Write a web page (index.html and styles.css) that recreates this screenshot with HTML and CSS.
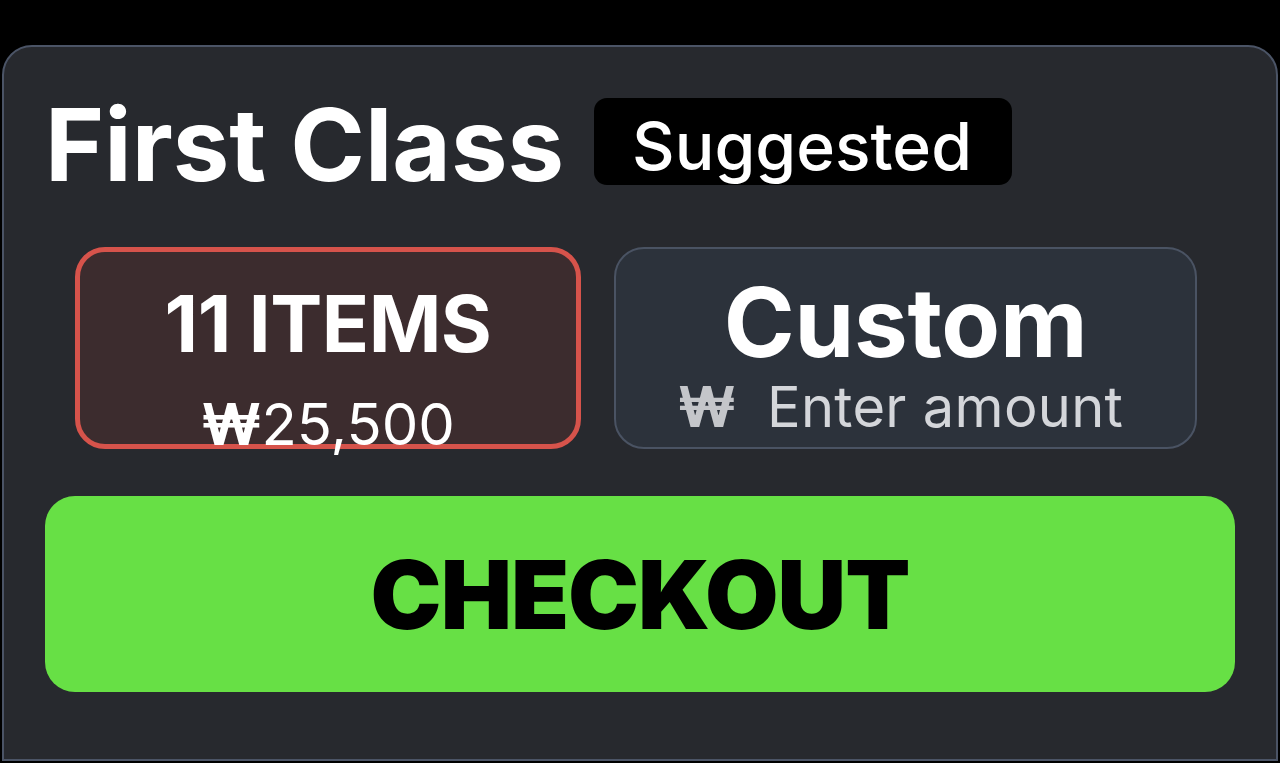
FILE: index.html
```html
<!DOCTYPE html>
<html lang="en">
<head>
<meta charset="utf-8">
<title>First Class</title>
<link rel="stylesheet" href="styles.css">
</head>
<body>
<div class="card">
  <div class="header">
    <h1 class="title">First Class</h1>
    <span class="badge">Suggested</span>
  </div>
  <div class="options">
    <div class="option option-selected">
      <div class="opt-title">11 ITEMS</div>
      <div class="opt-price"><span class="won-bold">₩</span>25,500</div>
    </div>
    <div class="option option-custom">
      <div class="opt-title custom-title">Custom</div>
      <div class="opt-input"><span class="won">₩</span><span class="placeholder">Enter amount</span></div>
    </div>
  </div>
  <button class="checkout">CHECKOUT</button>
</div>
</body>
</html>
```

FILE: styles.css
```css
* { box-sizing: border-box; }
html, body { margin: 0; padding: 0; background: #000; }
body {
  padding: 45px 2px 0 2px;
  height: 763px;
  overflow: hidden;
  font-family: Inter, "Liberation Sans", sans-serif;
}
.card {
  width: 1276px;
  height: 716px;
  background: #27292e;
  border: 2px solid #4b5466;
  border-radius: 30px 30px 0 0;
  padding: 51px 41px 0 41px;
}
.header {
  display: flex;
  align-items: flex-start;
  height: 87px;
}
.title {
  margin: 3px 0 0 0;
  font-family: Inter, sans-serif;
  font-weight: 700;
  font-size: 101px;
  line-height: 87px;
  color: #fff;
}
.badge {
  margin-left: 30px;
  height: 87px;
  padding: 9px 40px 0 38px;
  background: #000;
  border-radius: 13px;
  color: #fff;
  font-family: Inter, sans-serif;
  font-weight: 500;
  font-size: 66px;
  line-height: 78px;
}
.options {
  display: flex;
  gap: 33px;
  margin: 62px 0 0 30px;
}
.option {
  height: 202px;
  border-radius: 30px;
  display: flex;
  flex-direction: column;
  align-items: center;
  color: #fff;
}
.option-selected {
  width: 506px;
  background: #3c2c2e;
  border: 5px solid #d6534b;
  padding-top: 33px;
}
.option-custom {
  width: 583px;
  background: #2c323b;
  border: 2px solid #4a5363;
  padding-top: 25px;
}
.opt-title {
  font-family: Inter, sans-serif;
  font-weight: 700;
  font-size: 78px;
  line-height: 78px;
  letter-spacing: -0.5px;
}
.custom-title {
  font-size: 96px;
  line-height: 96px;
  letter-spacing: -0.3px;
}
.opt-price {
  margin-top: 32px;
  font-family: Inter, sans-serif;
  font-weight: 400;
  font-size: 58px;
  line-height: 58px;
  white-space: nowrap;
}
.won-bold { font-weight: 700; }
.opt-input {
  margin-top: 10px;
  display: flex;
  align-items: baseline;
  gap: 31px;
  font-family: Inter, sans-serif;
  font-size: 56px;
  line-height: 55px;
  margin-left: -10px;
}
.won { color: #c4c6ca; font-weight: 700; }
.placeholder { color: #d4d6da; letter-spacing: 0.3px; }
.checkout {
  display: flex;
  align-items: center;
  justify-content: center;
  width: 1190px;
  height: 196px;
  margin: 47px 0 0 0;
  border: none;
  border-radius: 30px;
  background: #67e045;
  color: #000;
  font-family: Inter, sans-serif;
  font-weight: 900;
  font-size: 95px;
  letter-spacing: -1px;
  padding: 0;
}
```
